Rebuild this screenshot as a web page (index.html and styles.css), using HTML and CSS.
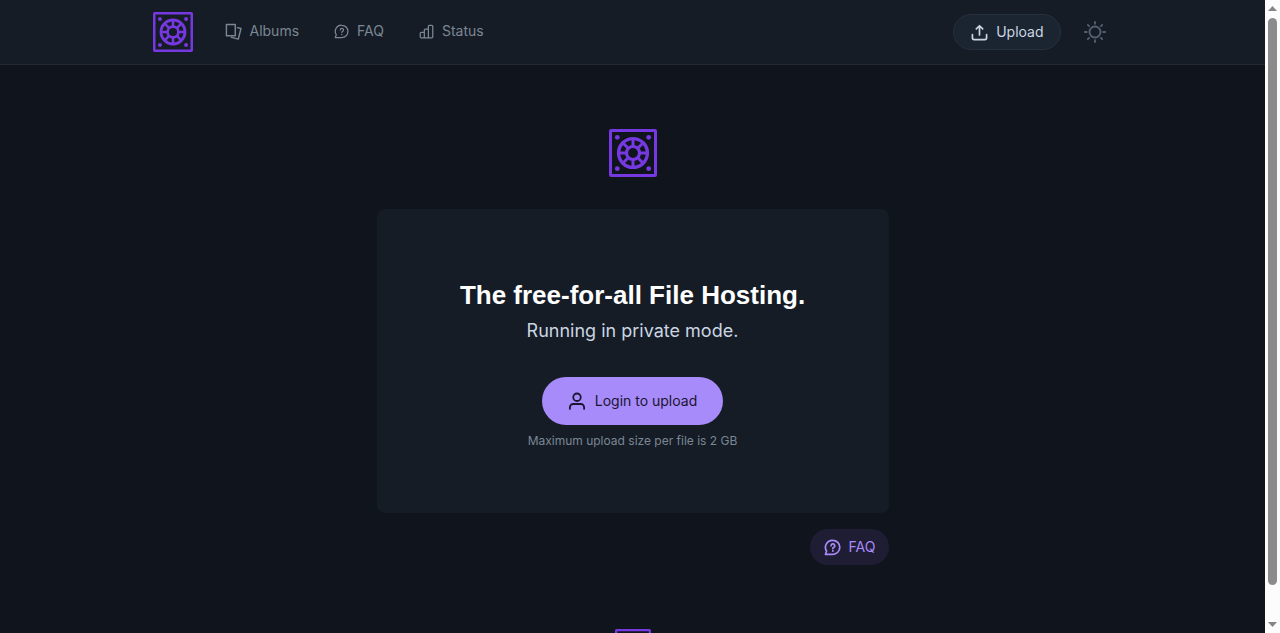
FILE: index.html
```html
<!DOCTYPE html>
<html lang="en">
<head>
<meta charset="utf-8">
<meta name="viewport" content="width=device-width, initial-scale=1">
<title>File Hosting</title>
<link rel="stylesheet" href="styles.css">
</head>
<body>
<svg class="defs" aria-hidden="true">
  <symbol id="logo" viewBox="0 0 48 48">
    <g fill="none" stroke="currentColor">
      <rect x="1.5" y="1.5" width="45" height="45" rx=".5" stroke-width="3"/>
      <circle cx="24" cy="24" r="14.400" stroke-width="3.400"/>
      <circle cx="24" cy="24" r="6.500" stroke-width="3.200"/>
      <path stroke-width="3" d="M24 10v8M24 30v8M10 24h8M30 24h8M14 14l5.700 5.700M28.300 28.300L34 34M34 14l-5.700 5.700M19.700 28.300L14 34"/>
    </g>
    <g fill="currentColor"><circle cx="8.300" cy="8.300" r="2.400"/><circle cx="39.700" cy="8.300" r="2.400"/><circle cx="8.300" cy="39.700" r="2.400"/><circle cx="39.700" cy="39.700" r="2.400"/></g>
  </symbol>
  <symbol id="faq" viewBox="0 0 24 24">
    <path d="M12.500 2a9.800 9.800 0 1 1 0 19.600H2l1.700-4.400A9.800 9.800 0 0 1 12.500 2z"/>
    <path d="M10 9.500a2.600 2.600 0 1 1 3.800 2.300c-.900.400-1.300.900-1.300 1.700M12.500 16.500v.500"/>
  </symbol>
</svg>
<div class="page">
  <header class="header">
    <div class="bar">
      <a class="brand" href="#" aria-label="Home"><svg class="logo"><use href="#logo"/></svg></a>
      <nav class="nav">
        <a class="nav-link" href="#albums"><svg class="icon" viewBox="0 0 24 24"><path d="M2 2h12.500v16H2zM17.500 6.500l5 1.300-3.700 15-9.800-2.500"/></svg>Albums</a>
        <a class="nav-link" href="#faq"><svg class="icon small"><use href="#faq"/></svg>FAQ</a>
        <a class="nav-link" href="#status"><svg class="icon small" viewBox="0 0 24 24"><path d="M3.500 13.500h5V22h-5A1.500 1.500 0 0 1 2 20.500V15a1.500 1.500 0 0 1 1.500-1.500zM8.500 22V9.500A1.500 1.500 0 0 1 10 8h5v14zM15 22V3.500A1.500 1.500 0 0 1 16.500 2h4A1.500 1.500 0 0 1 22 3.500v17a1.500 1.500 0 0 1-1.500 1.500z"/></svg>Status</a>
      </nav>
      <a class="upload" href="#upload"><svg class="icon" viewBox="0 0 24 24"><path d="M12 15.500V2.500M7.500 7L12 2.500 16.500 7M2 15v4.500A2.500 2.500 0 0 0 4.500 22h15a2.500 2.500 0 0 0 2.500-2.500V15"/></svg>Upload</a>
      <button class="theme" type="button" aria-label="Toggle theme"><svg class="sun" viewBox="0 0 24 24"><circle cx="12" cy="12" r="6"/><path d="M12 1v2M12 21v2M1 12h2M21 12h2M4.200 4.200l1.300 1.300M18.500 18.500l1.300 1.300M19.800 4.200l-1.300 1.300M5.500 18.500l-1.300 1.300"/></svg></button>
    </div>
  </header>
  <main class="main">
    <svg class="hero-logo" aria-hidden="true"><use href="#logo"/></svg>
    <section class="card">
      <h1 class="title">The free-for-all File Hosting.</h1>
      <p class="subtitle">Running in private mode.</p>
      <a class="login" href="#login"><svg class="icon large" viewBox="0 0 24 24"><circle cx="12" cy="7" r="5"/><path d="M2.500 22.500v-2a4.500 4.500 0 0 1 4.500-4.500h10a4.500 4.500 0 0 1 4.500 4.500v2"/></svg>Login to upload</a>
      <p class="hint">Maximum upload size per file is 2 GB</p>
    </section>
    <a class="faq-link" href="#faq"><svg class="icon"><use href="#faq"/></svg>FAQ</a>
  </main>
  <footer class="footer"><svg class="footer-logo" aria-hidden="true"><use href="#logo"/></svg></footer>
</div>
<div class="scrollbar" aria-hidden="true">
  <svg class="arrow" viewBox="0 0 9 5"><path d="M0 5l4.500-5L9 5z"/></svg>
  <div class="track"><div class="thumb"></div></div>
  <svg class="arrow" viewBox="0 0 9 5"><path d="M0 0l4.500 5L9 0z"/></svg>
</div>
</body>
</html>
```
FILE: styles.css
```css
* { box-sizing: border-box; }
body {
  margin: 0;
  display: flex;
  height: 100vh;
  overflow: hidden;
  background: #0f141d;
  color: #cbd5e1;
  font: 14px/20px Inter, sans-serif;
}
a { color: inherit; text-decoration: none; }
h1, p { margin: 0; }
.defs { position: absolute; width: 0; height: 0; }
.page { flex: 1; min-width: 0; overflow: hidden; }
.icon, .sun {
  width: 17px;
  height: 17px;
  flex: none;
  fill: none;
  stroke: currentColor;
  stroke-width: 2;
  stroke-linejoin: round;
  stroke-linecap: round;
}
.small { width: 15px; height: 15px; }
.large { width: 18px; height: 18px; stroke-width: 2.4; }
.header { background: #151c26; border-bottom: 1px solid #222a35; }
.bar {
  display: flex;
  align-items: center;
  height: 64px;
  max-width: 960px;
  margin: 0 auto;
}
.logo { display: block; width: 40px; height: 40px; }
.logo, .hero-logo, .footer-logo { color: #7638e0; }
.nav { display: flex; gap: 35px; margin: 0 auto 2px 32px; color: #7b8794; }
.nav-link { display: flex; align-items: center; gap: 8px; }
.upload {
  display: flex;
  align-items: center;
  gap: 8px;
  height: 36px;
  padding: 0 16px 0 17px;
  border: 1px solid #27313e;
  border-radius: 18px;
  background: #1b2532;
}
.upload .icon { stroke-width: 2.4; }
.theme {
  display: flex;
  margin: 0 7px 0 23px;
  padding: 0;
  border: 0;
  background: none;
  color: #536170;
}
.sun { width: 22px; height: 22px; }
.main {
  display: flex;
  flex-direction: column;
  align-items: center;
  width: 512px;
  max-width: 100%;
  margin: 0 auto;
  padding: 64px 0;
}
.hero-logo { width: 48px; height: 48px; margin-bottom: 32px; }
.card {
  display: flex;
  flex-direction: column;
  align-items: center;
  width: 100%;
  padding: 68px 32px 64px;
  border-radius: 8px;
  background: #151c26;
  text-align: center;
}
.title { color: #fff; font-family: "Liberation Sans", Arial, sans-serif; font-size: 26px; line-height: 36px; font-weight: 700; }
.subtitle { margin: 4px 0 32px; font-size: 18px; line-height: 28px; }
.login {
  display: flex;
  align-items: center;
  gap: 9px;
  height: 48px;
  padding: 0 26px;
  border-radius: 24px;
  background: #a78bfa;
  color: #1b1530;
}
.hint { margin-top: 8px; color: #7b8794; font-size: 12px; line-height: 16px; }
.faq-link {
  display: flex;
  align-items: center;
  align-self: flex-end;
  gap: 8px;
  height: 36px;
  margin-top: 16px;
  padding: 0 13px 0 14px;
  border-radius: 18px;
  background: #1f1d33;
  color: #a78bfa;
}
.faq-link .icon { stroke-width: 2.4; }
.footer { display: flex; justify-content: center; }
.footer-logo { width: 36px; height: 36px; }
.scrollbar {
  display: flex;
  flex-direction: column;
  align-items: center;
  width: 15px;
  padding: 6px 0;
  background: #fcfcfc;
}
.arrow { width: 9px; height: 5px; fill: #858585; }
.track { flex: 1; padding: 7px 0; }
.thumb { width: 9px; height: 95%; border-radius: 5px; background: #8b8b8b; }
```
